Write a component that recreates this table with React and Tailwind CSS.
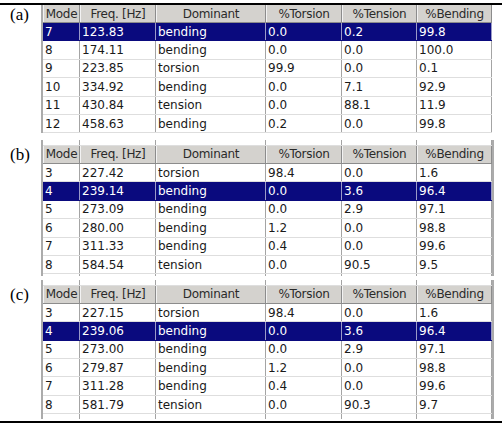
import clsx from 'clsx';

const widths = ['w-[37px]', 'w-[76px]', 'w-[110px]', 'w-[76px]', 'w-[75px]', 'w-[75px]'];
const headers = ['Mode', 'Freq. [Hz]', 'Dominant', '%Torsion', '%Tension', '%Bending'];

const panels = [
    {
        label: '(a)',
        sliver: false,
        selected: 0,
        rows: [
            ['7', '123.83', 'bending', '0.0', '0.2', '99.8'],
            ['8', '174.11', 'bending', '0.0', '0.0', '100.0'],
            ['9', '223.85', 'torsion', '99.9', '0.0', '0.1'],
            ['10', '334.92', 'bending', '0.0', '7.1', '92.9'],
            ['11', '430.84', 'tension', '0.0', '88.1', '11.9'],
            ['12', '458.63', 'bending', '0.2', '0.0', '99.8'],
        ],
    },
    {
        label: '(b)',
        sliver: true,
        selected: 1,
        rows: [
            ['3', '227.42', 'torsion', '98.4', '0.0', '1.6'],
            ['4', '239.14', 'bending', '0.0', '3.6', '96.4'],
            ['5', '273.09', 'bending', '0.0', '2.9', '97.1'],
            ['6', '280.00', 'bending', '1.2', '0.0', '98.8'],
            ['7', '311.33', 'bending', '0.4', '0.0', '99.6'],
            ['8', '584.54', 'tension', '0.0', '90.5', '9.5'],
        ],
    },
    {
        label: '(c)',
        sliver: true,
        selected: 1,
        rows: [
            ['3', '227.15', 'torsion', '98.4', '0.0', '1.6'],
            ['4', '239.06', 'bending', '0.0', '3.6', '96.4'],
            ['5', '273.00', 'bending', '0.0', '2.9', '97.1'],
            ['6', '279.87', 'bending', '1.2', '0.0', '98.8'],
            ['7', '311.28', 'bending', '0.4', '0.0', '99.6'],
            ['8', '581.79', 'tension', '0.0', '90.3', '9.7'],
        ],
    },
];

function Row({ cells, selected }) {
    return (
        <div
            className={clsx(
                'flex h-[18.4px] shrink-0 border-b',
                selected ? 'border-[#0a0a7e] bg-[#0a0a7e] text-white' : 'border-[#dedede] text-[#1a1a1a]'
            )}
        >
            {cells.map((c, i) => (
                <div
                    key={i}
                    className={clsx(
                        widths[i],
                        'flex shrink-0 items-center whitespace-nowrap border-r pl-[2px] leading-[18px]',
                        selected ? 'border-[#9a9ac8]' : 'border-[#a4a4a4]'
                    )}
                >
                    {c}
                </div>
            ))}
        </div>
    );
}

function Header() {
    return (
        <div className="flex h-[18px] shrink-0 border-b border-[#8c8c8c] bg-[#d4d2ce] text-[#2a2a2a]">
            {headers.map((h, i) => (
                <div
                    key={h}
                    className={clsx(
                        widths[i],
                        'flex shrink-0 items-center justify-center whitespace-nowrap border-r border-l border-r-[#8c8c8c] border-l-[#f2f2f2] leading-[18px] tracking-[-0.3px]'
                    )}
                >
                    {h}
                </div>
            ))}
        </div>
    );
}

// cut-off row edge above/below a table: only the column lines show
function Stub({ h, bottom }) {
    return (
        <div className={clsx('flex shrink-0', h, bottom && 'border-b border-[#dedede]')}>
            {widths.map((w, i) => (
                <div key={i} className={clsx(w, 'shrink-0 border-r border-[#a4a4a4]')} />
            ))}
        </div>
    );
}

function Panel({ panel, last }) {
    return (
        <div className="flex">
            <div className="w-[41px] shrink-0 pl-[10px]">
                <div className={clsx('font-["Liberation_Serif",serif] text-[17px] leading-[18px] text-black', panel.sliver ? 'mt-[6px]' : 'mt-[1px]')}>
                    {panel.label}
                </div>
            </div>
            <div
                className={clsx(
                    'flex flex-col border-l-2 border-[#ababab] font-["DejaVu_Sans",sans-serif] text-[12px]',
                    panel.sliver && 'border-r-2'
                )}
            >
                {panel.sliver && <Stub h="h-[6px]" bottom />}
                <Header />
                {panel.rows.map((r, i) => (
                    <Row key={i} cells={r} selected={i === panel.selected} />
                ))}
                {panel.sliver && <Stub h={last ? 'h-[5px]' : 'h-[2px]'} />}
            </div>
        </div>
    );
}

export default function App() {
    return (
        <div className="h-[427px] w-[502px] overflow-hidden bg-white pt-[3px]">
            <div className="h-[2px] bg-black" />
            <Panel panel={panels[0]} />
            <div className="h-[6.6px]" />
            <Panel panel={panels[1]} />
            <div className="h-[3.6px]" />
            <Panel panel={panels[2]} last />
            <div className="h-[2px]" />
            <div className="h-[2px] bg-black" />
        </div>
    );
}
